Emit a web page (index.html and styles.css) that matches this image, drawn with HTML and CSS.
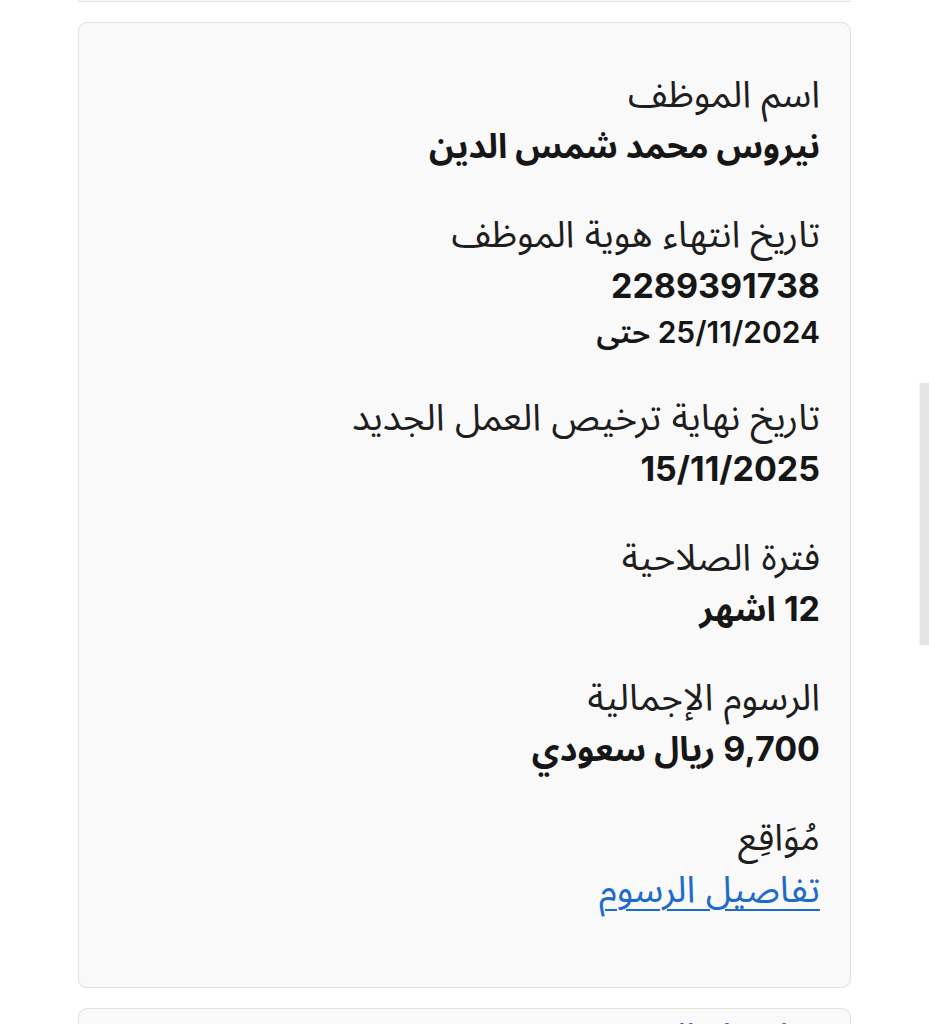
FILE: index.html
```html
<!DOCTYPE html>
<html lang="ar" dir="rtl">
<head>
  <meta charset="UTF-8">
  <meta name="viewport" content="width=device-width, initial-scale=1.0">
  <title>تفاصيل رخصة العمل</title>
  <link rel="stylesheet" href="styles.css">
</head>
<body>
  <div class="page">
    <div class="card card-prev"></div>

    <div class="card">
      <div class="field">
        <div class="label">اسم الموظف</div>
        <div class="value">نيروس محمد شمس الدين</div>
      </div>

      <div class="field">
        <div class="label">تاريخ انتهاء هوية الموظف</div>
        <div class="value">2289391738</div>
        <div class="sub">25/11/2024 حتى</div>
      </div>

      <div class="field">
        <div class="label">تاريخ نهاية ترخيص العمل الجديد</div>
        <div class="value">15/11/2025</div>
      </div>

      <div class="field">
        <div class="label">فترة الصلاحية</div>
        <div class="value">12 اشهر</div>
      </div>

      <div class="field">
        <div class="label">الرسوم الإجمالية</div>
        <div class="value">9,700 ريال سعودي</div>
      </div>

      <div class="field">
        <div class="label">مُوَاقِع</div>
        <div class="value-link"><a class="link" href="#">تفاصيل الرسوم</a></div>
      </div>
    </div>

    <div class="card card-next">
      <div class="value-link"><a class="link" href="#">تفاصيل الرسوم</a></div>
    </div>
  </div>

  <div class="scrollbar"></div>
</body>
</html>
```

FILE: styles.css
```css
html, body {
  margin: 0;
  height: 1024px;
  overflow: hidden;
}
body {
  font-family: "Inter", "Noto Sans Arabic", "Noto Sans", sans-serif;
  background-color: #fff;
  color: #1e1e1e;
}
.page {
  padding: 0 78px;
}
.card {
  background: #f9f9f9;
  border: 1px solid #e2e2e2;
  border-radius: 9px;
  padding: 28px 30px 53px;
  margin-bottom: 20px;
}
.card-prev {
  height: 1px;
  padding: 0;
  border-top: none;
  border-radius: 0 0 9px 9px;
}
.card-next {
  padding-top: 0;
  height: 200px;
}
.field {
  padding: 18px 0;
}
.label {
  font-size: 37px;
  line-height: 50px;
  height: 50px;
}
.value {
  font-size: 34px;
  line-height: 54px;
  height: 54px;
  font-weight: 700;
  color: #161616;
}
.sub {
  font-size: 30px;
  line-height: 38px;
  height: 38px;
  margin-bottom: 5px;
  font-weight: 600;
  color: #161616;
}
.value-link {
  height: 54px;
  line-height: 54px;
}
.link {
  font-size: 37px;
  color: #1f6bcc;
  text-decoration: underline;
  text-underline-offset: 7px;
  text-decoration-thickness: 2px;
}
.scrollbar {
  position: absolute;
  top: 383px;
  right: 0;
  width: 9px;
  height: 262px;
  background: #e4e4e4;
  border-left: 1px solid #f2f2f2;
}
```
